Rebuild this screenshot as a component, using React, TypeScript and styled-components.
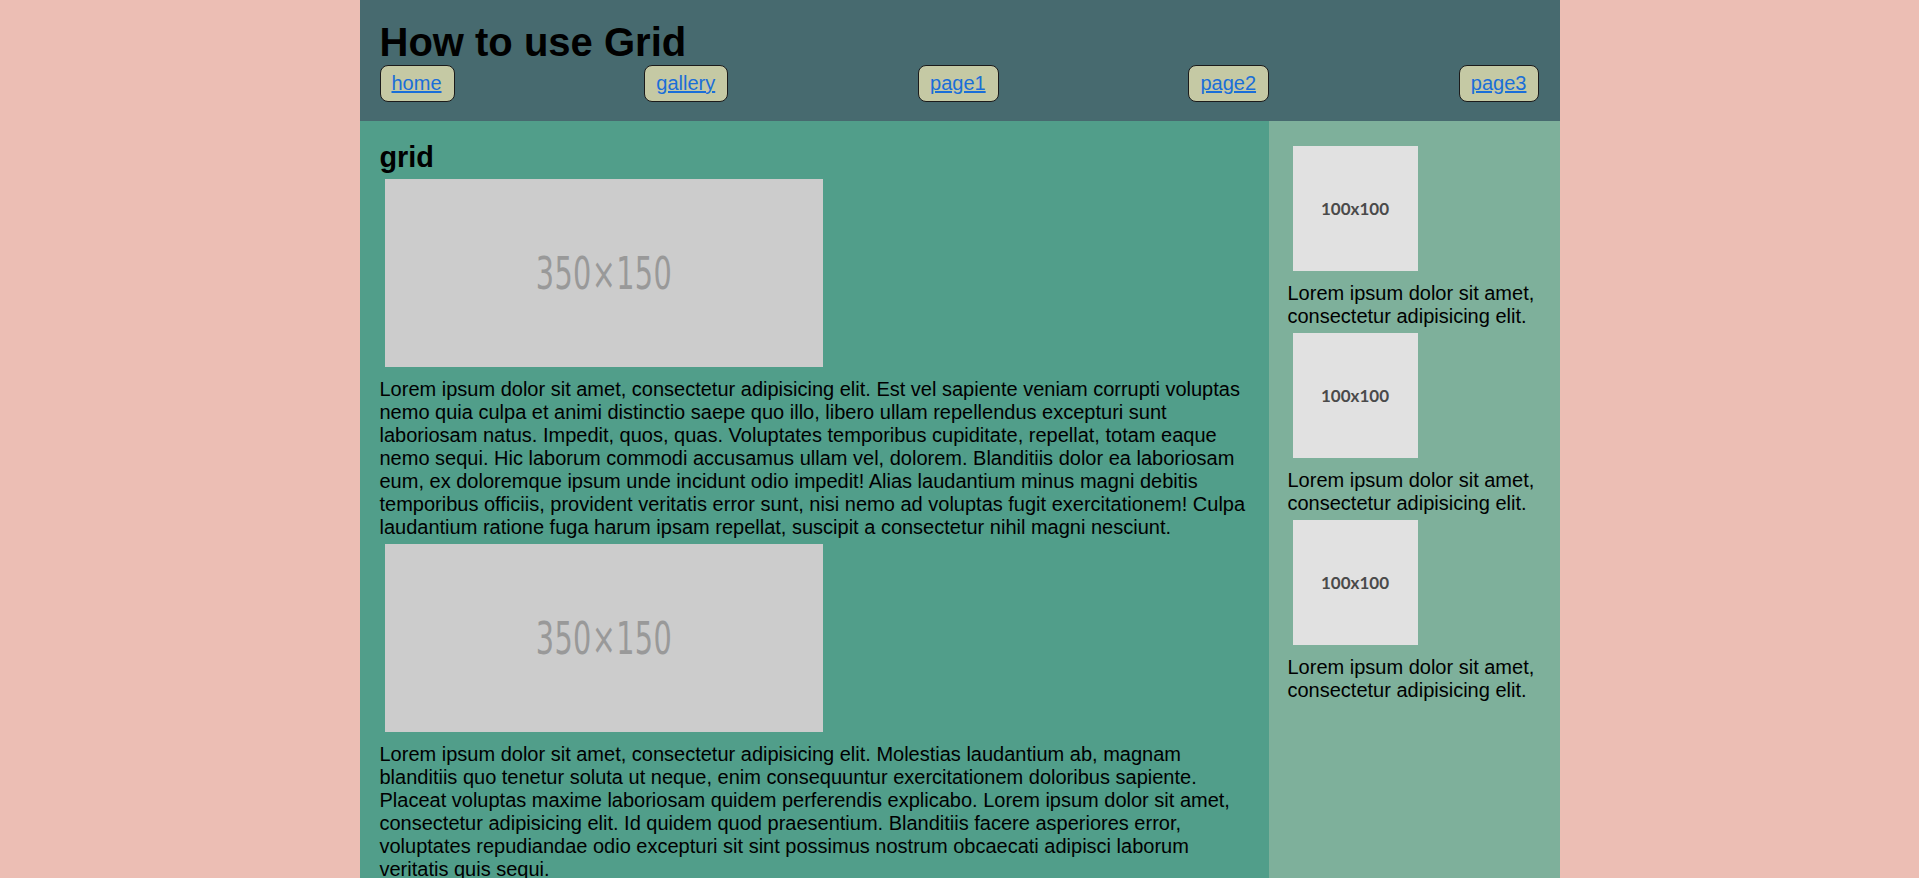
import styled, { createGlobalStyle } from "styled-components";

const GlobalStyle = createGlobalStyle`
  body {
    margin: 0;
    background-color: #ecbeb4;
    font-family: "Liberation Sans", Arial, sans-serif;
    color: #000;
  }
`;

const Wrapper = styled.div`
  width: 1200px;
  margin: 0 auto;
`;

const Header = styled.header`
  background-color: #476a6f;
  padding: 20px 20px 19px;
`;

const Title = styled.h1`
  margin: 0;
  font-size: 40px;
  line-height: 45px;
  font-weight: 700;
`;

const Nav = styled.nav`
  display: flex;
  justify-content: space-between;
  align-items: center;
`;

const NavButton = styled.a`
  display: block;
  padding: 6px 12px 6px 11px;
  border: 1px solid #1b1b1b;
  border-radius: 8px;
  background-color: #c5c9a4;
  color: #1a6ed8;
  font-size: 20px;
  line-height: 23px;
  text-decoration: underline;
`;

const Layout = styled.div`
  display: grid;
  grid-template-columns: 909px 291px;
`;

const Main = styled.main`
  background-color: #519e8a;
  padding: 20px 20px 40px;
  font-size: 20px;
  line-height: 23px;
`;

const Heading = styled.h2`
  margin: 0 0 2px;
  font-size: 28.8px;
  line-height: 33px;
  font-weight: 700;
`;

const Picture = styled.div<{ $gap?: number }>`
  display: block;
  margin: 5px 5px ${(p) => p.$gap ?? 11}px;
`;

const Placeholder = styled.div<{ $w: number; $h: number; $bg: string }>`
  display: flex;
  align-items: center;
  justify-content: center;
  width: ${(p) => p.$w}px;
  height: ${(p) => p.$h}px;
  background-color: ${(p) => p.$bg};
  overflow: hidden;
`;

const WideLabel = styled.span`
  display: inline-block;
  font-family: "DejaVu Sans Condensed", "Liberation Sans", sans-serif;
  font-size: 45px;
  color: #999999;
  transform: scaleX(0.71);
  letter-spacing: 0.5px;
`;

const SquareLabel = styled.span`
  font-family: Lato, "Liberation Sans", sans-serif;
  font-weight: 700;
  font-size: 17px;
  color: #4a4a4a;
`;

const Text = styled.p`
  margin: 0 0 2px;
`;

const Aside = styled.aside`
  background-color: #7eb09b;
  padding: 20px 20px 20px 19px;
  font-size: 20px;
  line-height: 23px;
`;

const Card = styled.div`
  margin-bottom: 3.5px;
`;

const links = ["home", "gallery", "page1", "page2", "page3"];

const paragraphs = [
  "Lorem ipsum dolor sit amet, consectetur adipisicing elit. Est vel sapiente veniam corrupti voluptas nemo quia culpa et animi distinctio saepe quo illo, libero ullam repellendus excepturi sunt laboriosam natus. Impedit, quos, quas. Voluptates temporibus cupiditate, repellat, totam eaque nemo sequi. Hic laborum commodi accusamus ullam vel, dolorem. Blanditiis dolor ea laboriosam eum, ex doloremque ipsum unde incidunt odio impedit! Alias laudantium minus magni debitis temporibus officiis, provident veritatis error sunt, nisi nemo ad voluptas fugit exercitationem! Culpa laudantium ratione fuga harum ipsam repellat, suscipit a consectetur nihil magni nesciunt.",
  "Lorem ipsum dolor sit amet, consectetur adipisicing elit. Molestias laudantium ab, magnam blanditiis quo tenetur soluta ut neque, enim consequuntur exercitationem doloribus sapiente. Placeat voluptas maxime laboriosam quidem perferendis explicabo. Lorem ipsum dolor sit amet, consectetur adipisicing elit. Id quidem quod praesentium. Blanditiis facere asperiores error, voluptates repudiandae odio excepturi sit sint possimus nostrum obcaecati adipisci laborum veritatis quis sequi.",
];

function App() {
  return (
    <>
      <GlobalStyle />
      <Wrapper>
        <Header>
          <Title>How to use Grid</Title>
          <Nav>
            {links.map((link) => (
              <NavButton key={link} href="#">
                {link}
              </NavButton>
            ))}
          </Nav>
        </Header>
        <Layout>
          <Main>
            <Heading>grid</Heading>
            {paragraphs.map((text, i) => (
              <div key={i}>
                <Picture>
                  <Placeholder $w={438} $h={188} $bg="#cccccc">
                    <WideLabel>350×150</WideLabel>
                  </Placeholder>
                </Picture>
                <Text>{text}</Text>
              </div>
            ))}
          </Main>
          <Aside>
            {[0, 1, 2].map((i) => (
              <Card key={i}>
                <Picture>
                  <Placeholder $w={125} $h={125} $bg="#e1e1e1">
                    <SquareLabel>100x100</SquareLabel>
                  </Placeholder>
                </Picture>
                <Text>Lorem ipsum dolor sit amet, consectetur adipisicing elit.</Text>
              </Card>
            ))}
          </Aside>
        </Layout>
      </Wrapper>
    </>
  );
}

export default App;
